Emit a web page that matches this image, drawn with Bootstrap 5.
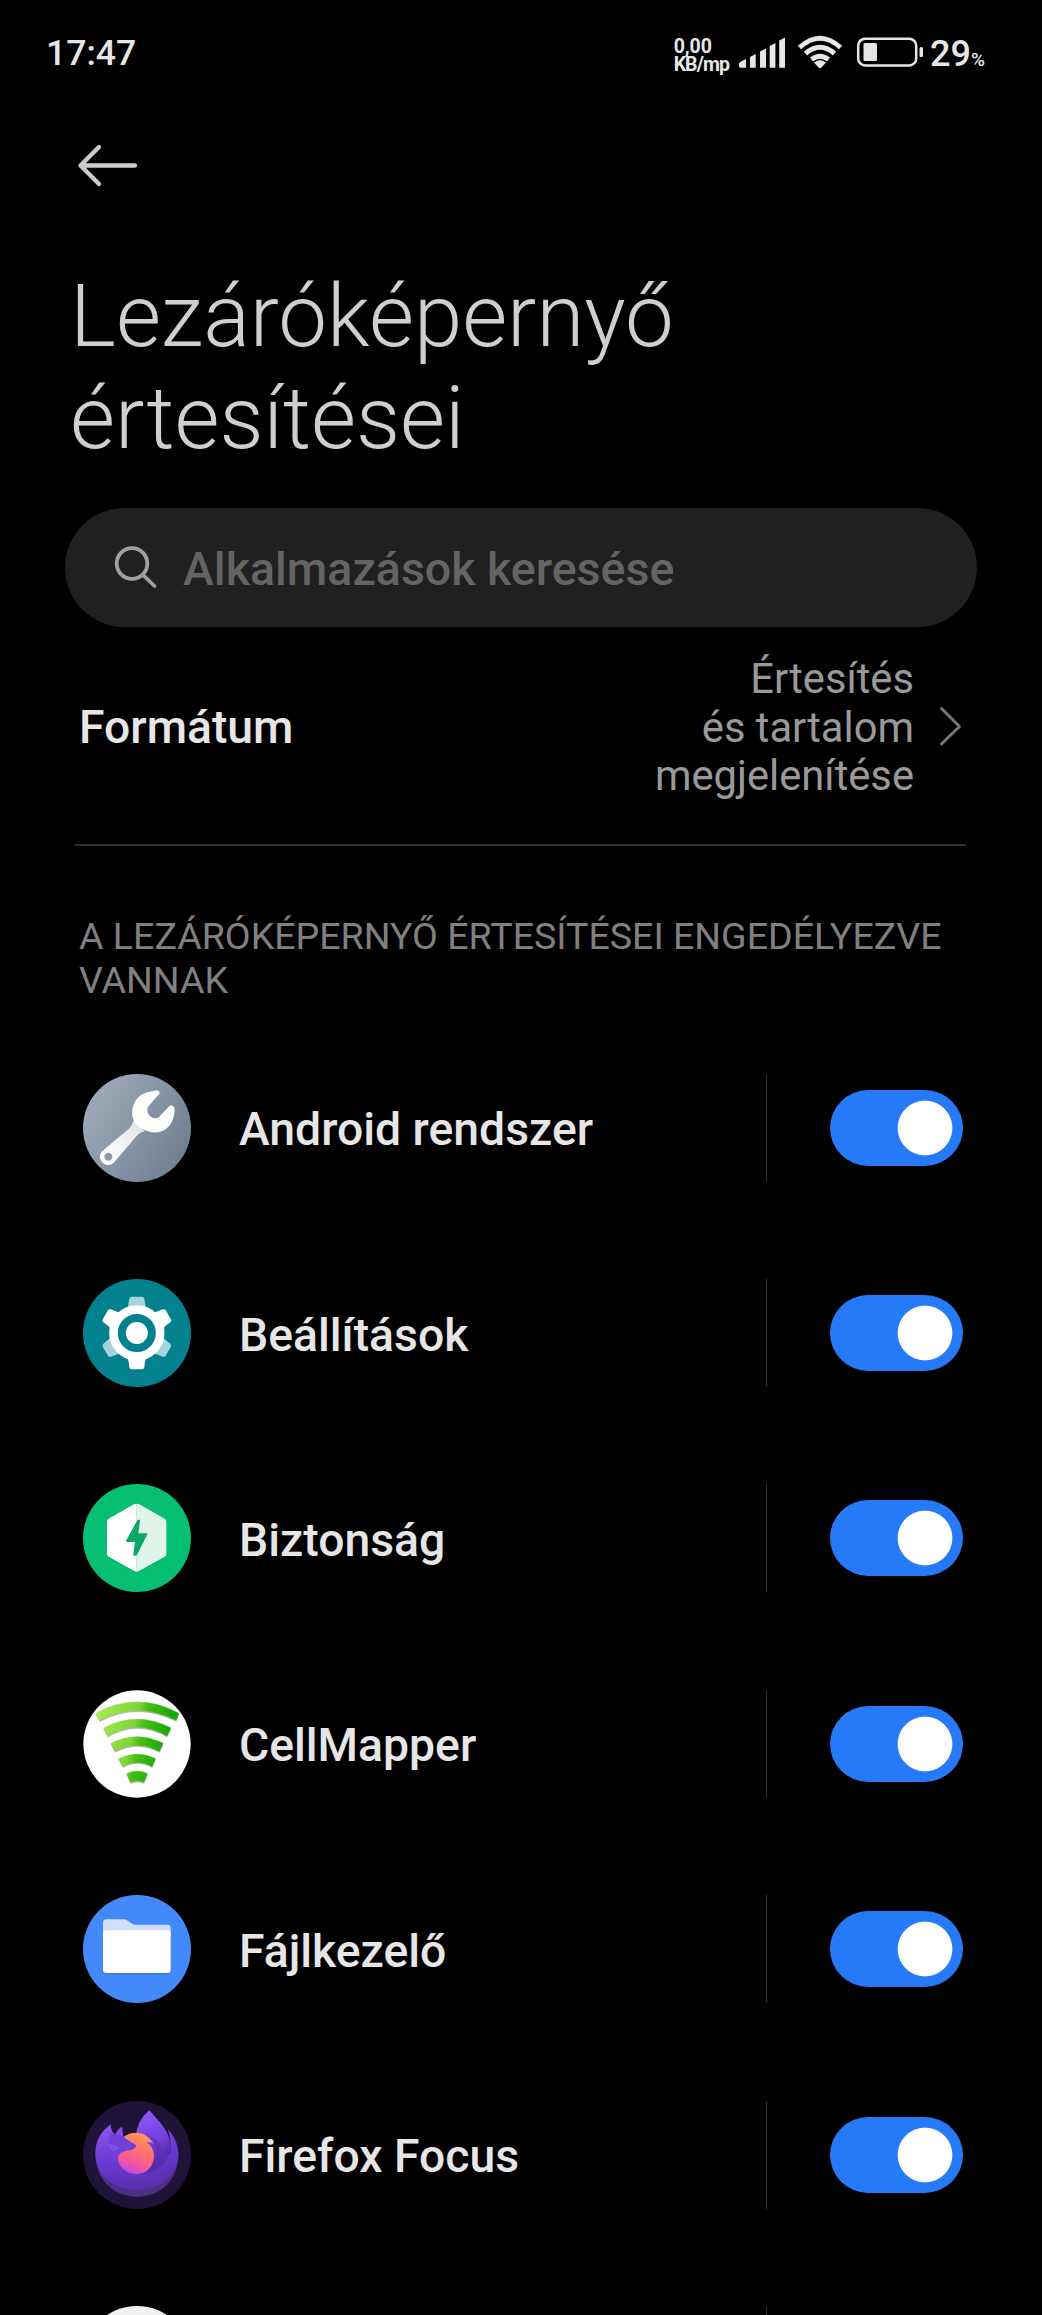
<!DOCTYPE html>
<html lang="hu" data-bs-theme="dark">
<head>
<meta charset="utf-8">
<meta name="viewport" content="width=device-width, initial-scale=1">
<title>Lezáróképernyő értesítései</title>
<link href="https://cdn.jsdelivr.net/npm/bootstrap@5.3.0/dist/css/bootstrap.min.css" rel="stylesheet">
<script src="https://cdn.jsdelivr.net/npm/bootstrap@5.3.0/dist/js/bootstrap.bundle.min.js"></script>
<style>
  body { background: #000; color: #e6e6e6; font-family: Roboto, "Noto Sans", sans-serif; }
  svg { display: block; flex: none; }
  .status-bar { height: 106px; padding: 0 57px 0 46px; font-weight: 500; }
  .clock, .charge { font-size: 35.600px; line-height: 42px; }
  .charge { margin-left: 6px; padding-top: 7px; font-size: 36px; }
  .charge small { font-size: 19px; }
  .net-speed { font-size: 19.500px; line-height: 17.500px; font-weight: 700; margin-right: 9px; padding-top: 5px; }
  .net-unit { letter-spacing: -.9px; }
  .back-row { height: 119px; padding: 37px 0 0 76px; }
  .page-title { font-size: 87px; line-height: 101.500px; font-weight: 300; color: #cfcfcf; padding-left: 70px; margin: 41px 0 0; }
  .search-box { margin: 39px 65px 0; height: 119px; background: #202020; padding-left: 48px; gap: 25px; color: #646464; font-size: 46.500px; font-weight: 500; }
  .search-box span { padding-top: 5px; }
  .format-row { height: 219px; margin: 0 76px 0 75px; padding: 0 0 20px 4px; border-bottom: 2px solid #2d2d2d; }
  .row-name { font-size: 46.300px; font-weight: 500; line-height: 54px; padding-top: 3px; }
  .format-value { font-size: 41.700px; line-height: 48.400px; color: #999; margin-right: 24px; padding-top: 5px; }
  .section-label { font-size: 37.570px; line-height: 44.400px; color: #808080; margin: 68px 79px 0; height: 111px; font-weight: 400; }
  .app-row { height: 205.400px; padding: 0 79px 0 83px; }
  .app-row .row-name { margin-left: 48px; }
  .app-row-cut { height: 57.600px; padding-top: 48.700px; }
  .app-rule { width: 1px; height: 108px; background: #303030; margin-right: 63px; flex: none; }
  .app-row-cut .app-rule { margin-right: 196px; }
  .app-row .form-check-input { width: 133px; height: 76px; margin: 0; border: 0; border-radius: 38px; flex: none;
    background: #277af7 radial-gradient(circle at 95px 38px, #fff 26.800px, rgba(255,255,255,0) 27.800px); }
</style>
</head>
<body>
<header class="status-bar d-flex align-items-center">
  <span class="clock me-auto">17:47</span>
  <div class="net-speed">0,00<br><span class="net-unit">KB/mp</span></div>
  <svg width="186" height="36" viewBox="738 35 186 36" fill="#e6e6e6">
    <path d="M740 62l6-3v8.700h-5.500q-1.500 0-1.500-1.800v-2.500zM750 57l5.700-3v13.700H750zM760 51.500l6-3v19.200h-6zM769.700 46l5.700-3v24.700h-5.700zM779.200 40.500l5.800-3v30.200h-5.800z"/>
    <g fill="none" stroke="#e6e6e6" stroke-width="5"><path d="M799.500 47.500Q820 29 840.500 47.500M805.500 53.500Q820 41 834.500 53.500M811.500 59.500Q820 53 828.500 59.500"/></g>
    <path d="M814 62.500q6-4.500 12 0l-4.500 5q-1.500 1.300-3 0z"/>
    <rect x="858.200" y="38.700" width="58" height="26.800" rx="7" fill="none" stroke="#e6e6e6" stroke-width="2.500"/>
    <rect x="863.500" y="43" width="13.500" height="18" rx="1.500"/><rect x="919.500" y="47" width="3.500" height="10" rx="1.500"/>
  </svg>
  <span class="charge">29<small>%</small></span>
</header>
<nav class="back-row">
  <svg width="64" height="46" viewBox="76 143 64 46" fill="none" stroke="#cdcdcd" stroke-width="4.300" stroke-linecap="round" stroke-linejoin="round"><path d="M99 147L80.500 165.500L99 184M81 165.500H135"/></svg>
</nav>
<main>
  <h1 class="page-title">Lezáróképernyő<br>értesítései</h1>
  <div class="search-box d-flex align-items-center rounded-pill">
    <svg width="45" height="45" viewBox="113 545 45 45" fill="none" stroke="#a0a0a0" stroke-width="3.800" stroke-linecap="round"><circle cx="132" cy="563.500" r="15.300"/><path d="M143 575l11.500 11"/></svg>
    <span>Alkalmazások keresése</span>
  </div>
  <div class="format-row d-flex align-items-center">
    <span class="row-name me-auto">Formátum</span>
    <div class="format-value text-end">Értesítés<br>és tartalom<br>megjelenítése</div>
    <svg width="28" height="44" viewBox="938 703 28 44" fill="none" stroke="#777" stroke-width="3" stroke-linecap="round" stroke-linejoin="round"><path d="M941.500 707.500L959.500 725.500L941.500 743"/></svg>
  </div>
  <h2 class="section-label">A LEZÁRÓKÉPERNYŐ ÉRTESÍTÉSEI ENGEDÉLYEZVE<br>VANNAK</h2>

  <div class="app-row d-flex align-items-center">
    <svg width="108" height="108" viewBox="69 71 324 324">
      <defs><linearGradient id="steel" x1="0" y1="0.200" x2="1" y2="0.800"><stop offset="0" stop-color="#a0acba"/><stop offset="1" stop-color="#6c7d91"/></linearGradient>
      <linearGradient id="handle" x1="1" y1="0" x2="0" y2="1"><stop offset="0" stop-color="#dcdfe3"/><stop offset=".5" stop-color="#f3f4f5"/><stop offset="1" stop-color="#fff"/></linearGradient></defs>
      <circle cx="231" cy="233" r="162" fill="url(#steel)"/>
      <path fill="url(#handle)" fill-rule="evenodd" d="M220 212Q217 226 206 236L127 302Q115 314 122 329Q130 344 145 344Q154 344 161 337L232 255Q240 246 254 243ZM145 307a12 12 0 1 0 .1 0z"/>
      <path fill="#fff" d="M285 121Q297 117 299 129Q298 134 292 137L264 169Q260 176 263 185Q266 198 278 202Q290 206 297 200L326 169Q332 163 340 168Q346 173 344 184Q340 218 318 236Q298 250 272 245Q240 238 225 218Q215 204 217 180Q220 150 243 134Q260 124 285 121Z"/>
    </svg>
    <span class="row-name me-auto">Android rendszer</span>
    <span class="app-rule"></span><input class="form-check-input" type="checkbox" role="switch" aria-label="Android rendszer" checked>
  </div>

  <div class="app-row d-flex align-items-center">
    <svg width="108" height="108" viewBox="69 687 324 324">
      <circle cx="231" cy="849" r="162" fill="#03818f"/>
      <path id="tooth" fill="#a6d3dc" d="M203 775L208 746Q209 740 215 740H246Q252 740 253 746L258 775Z"/>
      <use href="#tooth" transform="rotate(120 230.500 849)"/><use href="#tooth" transform="rotate(240 230.500 849)"/>
      <g fill="#fff"><path d="M199 779Q206 773 208 746Q209 740 215 740H246Q252 740 253 746Q255 773 262 779Z" transform="rotate(60 230.500 849)"/>
      <path d="M199 779Q206 773 208 746Q209 740 215 740H246Q252 740 253 746Q255 773 262 779Z" transform="rotate(180 230.500 849)"/>
      <path d="M199 779Q206 773 208 746Q209 740 215 740H246Q252 740 253 746Q255 773 262 779Z" transform="rotate(300 230.500 849)"/></g>
      <circle cx="230.500" cy="849" r="70" fill="none" stroke="#fff" stroke-width="26"/><circle cx="230.500" cy="849" r="33" fill="#fff"/>
    </svg>
    <span class="row-name me-auto">Beállítások</span>
    <span class="app-rule"></span><input class="form-check-input" type="checkbox" role="switch" aria-label="Beállítások" checked>
  </div>

  <div class="app-row d-flex align-items-center">
    <svg width="108" height="108" viewBox="69 73 324 324">
      <circle cx="231" cy="235" r="162" fill="#07bf72"/>
      <path fill="#05ad67" opacity=".6" d="M141 280L230 341L319 280V294L235 340Q230 343 225 340L141 294Z"/>
      <path fill="#fff" d="M230 132Q226 132 222 134L146 177Q141 180 141 186V282Q141 288 146 291L223 334Q227 336 230 336Z"/>
      <path fill="#dff5eb" d="M230 132Q234 132 238 134L314 177Q319 180 319 186V282Q319 288 314 291L237 334Q233 336 230 336Z"/>
      <path fill="#0da765" d="M231 183Q232 180 235 180H239Q241 180 240 184L235 221H259Q264 222 261 226L232 284Q230 288 226 288H222Q219 288 220 284L225 247H201Q197 246 199 242Z"/>
    </svg>
    <span class="row-name me-auto">Biztonság</span>
    <span class="app-rule"></span><input class="form-check-input" type="checkbox" role="switch" aria-label="Biztonság" checked>
  </div>

  <div class="app-row d-flex align-items-center">
    <svg width="108" height="108" viewBox="69 690 324 324">
      <defs><linearGradient id="leaf" gradientUnits="userSpaceOnUse" x1="120" y1="740" x2="330" y2="790"><stop offset="0" stop-color="#a6ea54"/><stop offset=".52" stop-color="#80d636"/><stop offset=".66" stop-color="#45bd14"/><stop offset="1" stop-color="#18a806"/></linearGradient></defs>
      <circle cx="231" cy="852" r="161" fill="#fff"/>
      <path fill="#98ab8c" opacity=".8" transform="translate(1 5)" d="M107 760Q231 692 356 760L348 780Q231 722 118 780ZM131 804Q231 752 332 804L321 827Q231 775 142 827ZM153 850Q231 810 309 850L298 873Q231 837 164 873ZM176 896Q231 870 286 896L276 919Q231 894 188 919ZM200 941Q231 927 262 941L251 966Q231 957 211 966Z"/>
      <path fill="url(#leaf)" stroke="url(#leaf)" stroke-width="2" stroke-linejoin="round" d="M107 760Q231 692 356 760L348 780Q231 722 118 780ZM131 804Q231 752 332 804L321 827Q231 775 142 827ZM153 850Q231 810 309 850L298 873Q231 837 164 873ZM176 896Q231 870 286 896L276 919Q231 894 188 919ZM200 941Q231 927 262 941L251 966Q231 957 211 966Z"/>
    </svg>
    <span class="row-name me-auto">CellMapper</span>
    <span class="app-rule"></span><input class="form-check-input" type="checkbox" role="switch" aria-label="CellMapper" checked>
  </div>

  <div class="app-row d-flex align-items-center">
    <svg width="108" height="108" viewBox="69 76 324 324">
      <circle cx="231" cy="238" r="162" fill="#4489fa"/>
      <rect x="129" y="190" width="204" height="124" rx="10" fill="#2f70dc" opacity=".7"/>
      <path fill="#cfe0fd" d="M129 200V159Q129 149 139 149H192Q198 149 203 153L218 163Q222 165 228 165H322Q332 165 332 175V200Z"/>
      <rect x="129" y="182" width="203" height="128" rx="9" fill="#fff"/>
    </svg>
    <span class="row-name me-auto">Fájlkezelő</span>
    <span class="app-rule"></span><input class="form-check-input" type="checkbox" role="switch" aria-label="Fájlkezelő" checked>
  </div>

  <div class="app-row d-flex align-items-center">
    <svg width="108" height="108" viewBox="69 693 324 324">
      <defs>
        <linearGradient id="fur" x1=".2" y1="0" x2=".5" y2="1"><stop offset="0" stop-color="#8a54ee"/><stop offset=".5" stop-color="#6a3ad2"/><stop offset="1" stop-color="#5a2db0"/></linearGradient>
        <linearGradient id="tail" x1=".3" y1="0" x2=".5" y2="1"><stop offset="0" stop-color="#9059ff"/><stop offset=".5" stop-color="#7540dc"/><stop offset="1" stop-color="#4b2596"/></linearGradient>
        <linearGradient id="globe" x1=".65" y1="0" x2=".3" y2="1"><stop offset="0" stop-color="#ff9a56"/><stop offset=".5" stop-color="#ff6a78"/><stop offset=".75" stop-color="#f254a4"/><stop offset="1" stop-color="#b04de8"/></linearGradient>
      </defs>
      <circle cx="231" cy="855" r="162" fill="#20133a"/>
      <path fill="#4b2f80" d="M106 850C106 932 162 980 231 980S356 932 356 850Z"/>
      <path fill="url(#fur)" d="M152 763Q106 796 106 850C108 918 164 961 231 961S352 920 355 853Q355 810 323 777Q335 811 330 850L280 890L180 870L190 801L186 770Q170 779 166 793Q153 787 152 763Z"/>
      <path fill="url(#tail)" d="M268 721Q228 755 228 800Q232 880 270 908Q312 890 328 850Q340 805 300 757Q280 735 268 721Z"/>
      <path fill="#5a2db0" opacity=".55" d="M262 795Q300 830 284 874Q270 906 245 912Q300 908 322 866Q330 840 330 800Q326 830 305 845Q307 812 262 795Z"/>
      <path fill="url(#globe)" d="M190 801Q208 787 232 788Q258 789 280 819Q270 816 259 816Q282 832 282 859C280 892 258 912 231 912C200 912 174 892 173 860Q175 845 190 840Z"/>
      <path fill="#7040d8" d="M150 789Q168 790 192 802Q208 815 230 826Q225 838 212 841Q190 842 178 853Q170 862 176 882Q150 870 140 840Z"/>
      <path fill="#8b55ee" opacity=".6" d="M140 822Q165 822 178 832Q170 845 157 843Q145 836 140 822Z"/>
    </svg>
    <span class="row-name me-auto">Firefox Focus</span>
    <span class="app-rule"></span><input class="form-check-input" type="checkbox" role="switch" aria-label="Firefox Focus" checked>
  </div>

  <div class="app-row app-row-cut d-flex align-items-start overflow-hidden">
    <svg class="me-auto" width="108" height="108" viewBox="0 0 108 108"><circle cx="54" cy="54" r="54" fill="#f0f1f3"/></svg>
    <span class="app-rule"></span>
  </div>
</main>
</body>
</html>
